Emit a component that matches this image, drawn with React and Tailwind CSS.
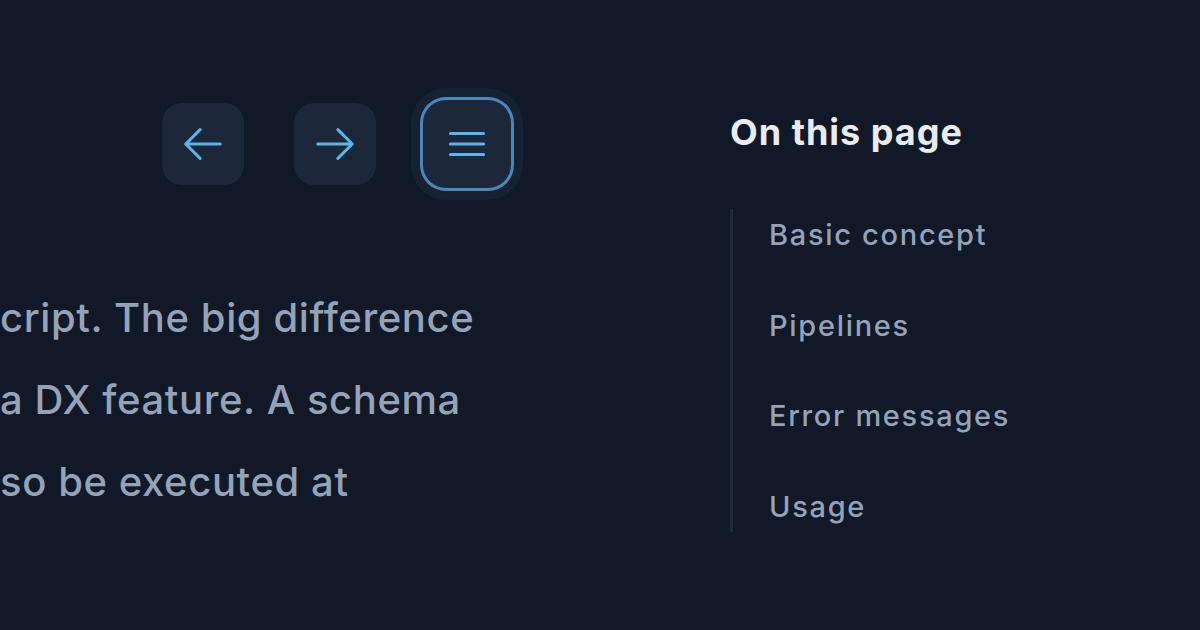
const arrowLeft = "M10.5 19.5 3 12l7.5-7.5M3 12h18";
const arrowRight = "M13.5 4.5 21 12l-7.5 7.5M21 12H3";
const bars = "M3.75 6.75h16.5M3.75 12h16.5m-16.5 5.25h16.5";

function Icon({ d, size = 46 }) {
  return (
    <svg
      width={size}
      height={size}
      viewBox="0 0 24 24"
      fill="none"
      stroke="currentColor"
      strokeWidth="1.6"
      strokeLinecap="round"
      strokeLinejoin="round"
    >
      <path d={d} />
    </svg>
  );
}

const toc = ["Basic concept", "Pipelines", "Error messages", "Usage"];

export default function App() {
  return (
    <div
      className="w-[1200px] h-[630px] bg-[#111827] flex overflow-hidden"
      style={{ fontFamily: "Inter, 'Open Sans', sans-serif" }}
    >
      <div className="w-[730px] shrink-0 pt-[103px]">
        <div className="flex items-center gap-[50px] pl-[162px] text-[#5cb3ee]">
          <button className="w-[82px] h-[82px] rounded-[20px] bg-[#1c2739] flex items-center justify-center">
            <Icon d={arrowLeft} />
          </button>
          <button className="w-[82px] h-[82px] rounded-[20px] bg-[#1c2739] flex items-center justify-center">
            <Icon d={arrowRight} />
          </button>
          <button className="w-[82px] h-[82px] rounded-[20px] bg-[#1c2739] flex items-center justify-center shadow-[0_0_0_3px_#1c2739,0_0_0_6px_#4b87bd,0_0_0_15px_#162132]">
            <Icon d={bars} size={48} />
          </button>
        </div>
        <div className="mt-[92px] text-[40px] leading-[82px] tracking-[0.6px] text-[#94a3b8] font-medium whitespace-nowrap">
          <div>cript. The big difference</div>
          <div>a DX feature. A schema</div>
          <div>so be executed at</div>
        </div>
      </div>

      <div className="pt-[112px]">
        <h3 className="text-[36px] leading-[40px] tracking-[1px] font-bold text-[#e8ebf0]">On this page</h3>
        <ul className="mt-[57px] border-l-[3px] border-[#1e293b] pl-[36px] pt-[6px] pb-[5px] flex flex-col gap-[50.5px]">
          {toc.map((item) => (
            <li key={item} className="text-[29px] leading-[40px] tracking-[1.7px] text-[#94a3b8] font-medium">
              {item}
            </li>
          ))}
        </ul>
      </div>
    </div>
  );
}
